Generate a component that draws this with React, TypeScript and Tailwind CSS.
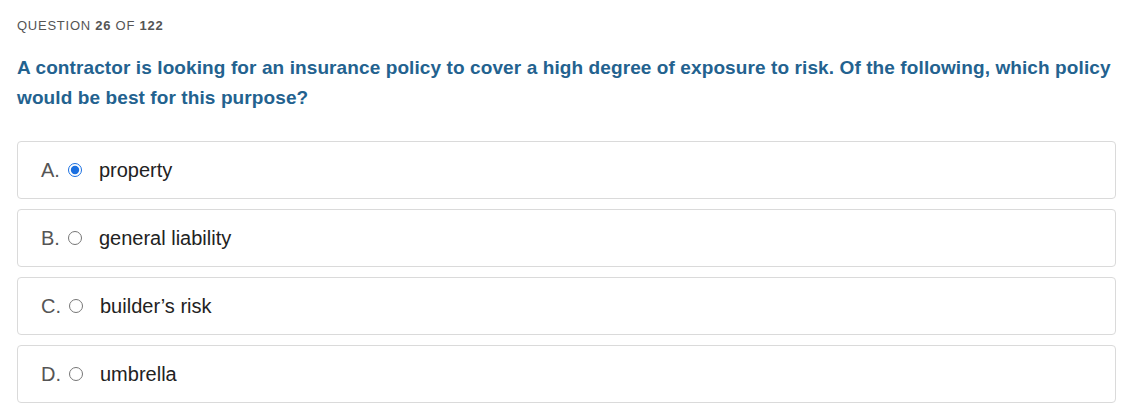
import React from 'react';

const options = [
  { letter: 'A.', text: 'property', checked: true },
  { letter: 'B.', text: 'general liability', checked: false },
  { letter: 'C.', text: 'builder\u2019s risk', checked: false },
  { letter: 'D.', text: 'umbrella', checked: false },
];

export default function App() {
  return (
    <div className="min-h-[410px] bg-white pl-[17px] pr-[19px] pt-[18px] font-['Liberation_Sans',Arial,sans-serif]">
      <div className="text-[13px] leading-[16px] tracking-[0.75px] uppercase text-[#555]">
        Question <span className="font-bold">26</span> of <span className="font-bold">122</span>
      </div>

      <h2 className="mt-[19px] mr-[-12px] text-[19px] leading-[30px] tracking-[0.1px] font-bold text-[#23628f]">
        A contractor is looking for an insurance policy to cover a high degree of exposure to risk. Of the following, which policy would be best for this purpose?
      </h2>

      <div className="mt-[28px] flex flex-col gap-[10px]">
        {options.map((o) => (
          <label
            key={o.letter}
            className="flex h-[58px] items-center rounded-[4px] border border-[#dadada] pl-[23px] text-[20px]"
          >
            <span className="text-[#555]">{o.letter}</span>
            <input
              type="radio"
              name="answer"
              defaultChecked={o.checked}
              className="ml-[8px] h-[14px] w-[14px] accent-[#1a6fe0]"
            />
            <span className="ml-[17px] text-[#222]">{o.text}</span>
          </label>
        ))}
      </div>
    </div>
  );
}
